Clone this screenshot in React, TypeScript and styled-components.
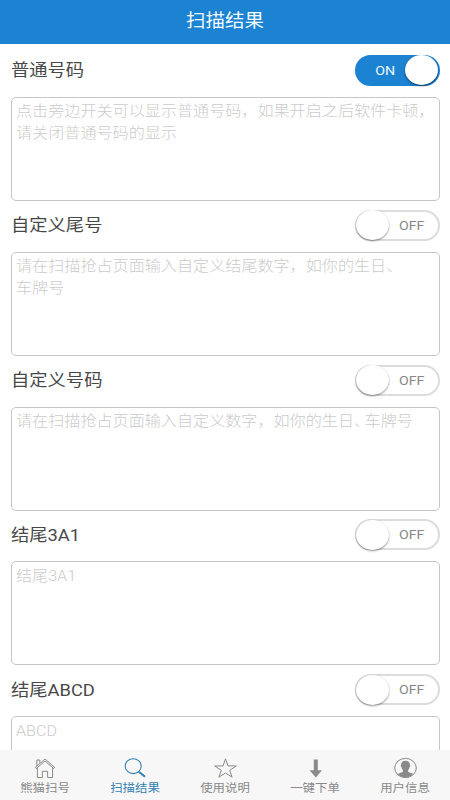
import React, { useState } from "react";
import styled, { createGlobalStyle } from "styled-components";

const GlobalStyle = createGlobalStyle`
  * { box-sizing: border-box; }
  body {
    margin: 0;
    background: #fff;
    font-family: Roboto, "Noto Sans CJK SC", sans-serif;
    overflow: hidden;
  }
`;

const Screen = styled.div`
  display: flex;
  flex-direction: column;
  height: 800px;
  width: 450px;
`;

const Header = styled.header`
  flex: none;
  height: 44px;
  background: #1c82d2;
  color: #f2fbff;
  display: flex;
  justify-content: center;
  padding: 7px 0 0;
`;

const Title = styled.h1`
  margin: 0;
  font-size: 18px;
  line-height: 28px;
  font-weight: 400;
  transform: scaleX(1.083);
`;

const Content = styled.main`
  flex: 1;
  min-height: 0;
  overflow: hidden;
  padding: 2px 10px 0 11px;
`;

const SectionHead = styled.div`
  height: 50.85px;
  display: flex;
  align-items: center;
  justify-content: space-between;
`;

const Label = styled.h2`
  margin: 0;
  font-size: 16.5px;
  line-height: 24px;
  font-weight: 400;
  color: #484848;
  transform: scaleX(1.108);
  transform-origin: left;
`;

const Track = styled.button<{ $on: boolean }>`
  width: 85px;
  height: 31px;
  margin: 0 0 2px;
  padding: 0;
  border: ${(p) => (p.$on ? "0" : "2px solid #dcdcdc")};
  border-radius: 16px;
  background: ${(p) => (p.$on ? "#1c82d2" : "#fff")};
  display: flex;
  align-items: center;
  flex-direction: ${(p) => (p.$on ? "row-reverse" : "row")};
  font-family: inherit;
`;

const Knob = styled.span<{ $on: boolean }>`
  flex: none;
  width: 33px;
  height: 30px;
  margin: ${(p) => (p.$on ? "0 2px 0 0" : "0 0 0 -1px")};
  border-radius: 50%;
  background: #fff;
  box-shadow: ${(p) =>
    p.$on ? "0 1px 2px 0 rgba(0,0,0,.6)" : "0 1px 2px 0 rgba(0,0,0,.45)"};
`;

const State = styled.span<{ $on: boolean }>`
  font-size: 13px;
  line-height: 16px;
  padding-top: 1px;
  color: ${(p) => (p.$on ? "#e9f8ff" : "#888")};
  transform: scaleX(1.09);
  margin: ${(p) => (p.$on ? "0 11px 0 0" : "0 0 0 10.5px")};
`;

const Box = styled.div`
  height: 104px;
  border: 1px solid #c6c6c6;
  border-radius: 5px;
  padding: 3.5px 4px;
  overflow: hidden;
`;

const Hint = styled.p`
  margin: 0 0 0 -0.5px;
  white-space: pre;
  font-size: 14.5px;
  line-height: 22px;
  font-weight: 300;
  color: #cbcbcb;
  transform: scaleX(1.11);
  transform-origin: left;
`;

const Tight = styled.span`
  letter-spacing: -5px;
`;

const TabBar = styled.nav`
  flex: none;
  height: 50px;
  background: #f7f7f7;
  display: grid;
  grid-template-columns: repeat(5, 1fr);
`;

const Tab = styled.a<{ $active?: boolean }>`
  display: flex;
  flex-direction: column;
  align-items: center;
  padding-top: 7px;
  color: ${(p) => (p.$active ? "#3580b2" : "#8a8a8a")};
  svg { display: block; flex: none; }
`;

const TabText = styled.span`
  font-size: 11.5px;
  line-height: 16px;
  margin: 1px 0 0;
  transform: scaleX(1.08);
`;

const HomeIcon = () => (
  <svg width="24" height="22" viewBox="0 0 24 22" fill="none" stroke="currentColor" strokeWidth="1">
    <path d="M2.3 10.4 12 2l9.7 8.4-1 1.1L12 4l-8.7 7.5z" />
    <path d="M3.8 8.600V3h3v2.800M4.400 11v9.500h5v-6.200h5.200v6.200h5V11" />
  </svg>
);

const SearchIcon = () => (
  <svg width="24" height="22" viewBox="0 0 24 22" fill="none" stroke="currentColor">
    <ellipse cx="10.2" cy="9.2" rx="8" ry="7.4" strokeWidth="1.1" />
    <path d="m15.8 14.8 6.2 5" strokeWidth="2.1" />
  </svg>
);

const StarIcon = () => (
  <svg width="24" height="22" viewBox="0 0 24 22" fill="none" stroke="currentColor" strokeWidth="1">
    <path d="m12.5 1.8 2.5 7.1 8.3.1-6.6 4.300 2.400 6.900-6.600-4.200-6.600 4.200 2.400-6.900L1.700 9l8.300-.1z" />
  </svg>
);

const ArrowIcon = () => (
  <svg width="24" height="22" viewBox="0 0 24 22" fill="currentColor">
    <path d="M10.800 2.500h4v10.700h4.200l-6.200 7.300-6.200-7.300h4.200z" />
  </svg>
);

const UserIcon = () => (
  <svg width="24" height="22" viewBox="0 0 24 22">
    <g transform="translate(.5 0)">
      <ellipse cx="12" cy="11" rx="10.8" ry="9.6" fill="none" stroke="currentColor" />
      <path
        fill="currentColor"
        d="M12 3.7c3 0 4.5 1.7 4.4 4.2.6.2.5 1.6-.3 2.1-.2 1.4-.8 2.3-1.5 2.9v1.6c.7 1.2 3.4 1.4 5.1 2.4C17.8 19 15.2 20.4 12 20.4S6.2 19 4.3 16.9c1.7-1 4.4-1.2 5.1-2.4v-1.6c-.7-.6-1.3-1.5-1.5-2.9-.8-.5-.9-1.9-.3-2.1-.1-2.5 1.4-4.2 4.4-4.2z"
      />
    </g>
  </svg>
);

interface SectionData {
  label: string;
  hint: React.ReactNode;
  on?: boolean;
}

const sections: SectionData[] = [
  {
    label: "普通号码",
    hint: "点击旁边开关可以显示普通号码，如果开启之后软件卡顿，\n请关闭普通号码的显示",
    on: true,
  },
  { label: "自定义尾号", hint: "请在扫描抢占页面输入自定义结尾数字，如你的生日、\n车牌号" },
  {
    label: "自定义号码",
    hint: (
      <>
        请在扫描抢占页面输入自定义数字，如你的生日<Tight>、</Tight>车牌号
      </>
    ),
  },
  { label: "结尾3A1", hint: "结尾3A1" },
  { label: "结尾ABCD", hint: "ABCD" },
];

function Section({ label, hint, on: initial = false }: SectionData) {
  const [on, setOn] = useState(initial);
  return (
    <section>
      <SectionHead>
        <Label>{label}</Label>
        <Track $on={on} role="switch" aria-checked={on} onClick={() => setOn(!on)}>
          <Knob $on={on} />
          <State $on={on}>{on ? "ON" : "OFF"}</State>
        </Track>
      </SectionHead>
      <Box>
        <Hint>{hint}</Hint>
      </Box>
    </section>
  );
}

const tabs = [
  { text: "熊猫扫号", Icon: HomeIcon },
  { text: "扫描结果", Icon: SearchIcon, active: true },
  { text: "使用说明", Icon: StarIcon },
  { text: "一键下单", Icon: ArrowIcon },
  { text: "用户信息", Icon: UserIcon },
];

export default function App() {
  return (
    <Screen>
      <GlobalStyle />
      <Header>
        <Title>扫描结果</Title>
      </Header>
      <Content>
        {sections.map((s) => (
          <Section key={s.label} {...s} />
        ))}
      </Content>
      <TabBar>
        {tabs.map(({ text, Icon, active }) => (
          <Tab key={text} $active={active}>
            <Icon />
            <TabText>{text}</TabText>
          </Tab>
        ))}
      </TabBar>
    </Screen>
  );
}
